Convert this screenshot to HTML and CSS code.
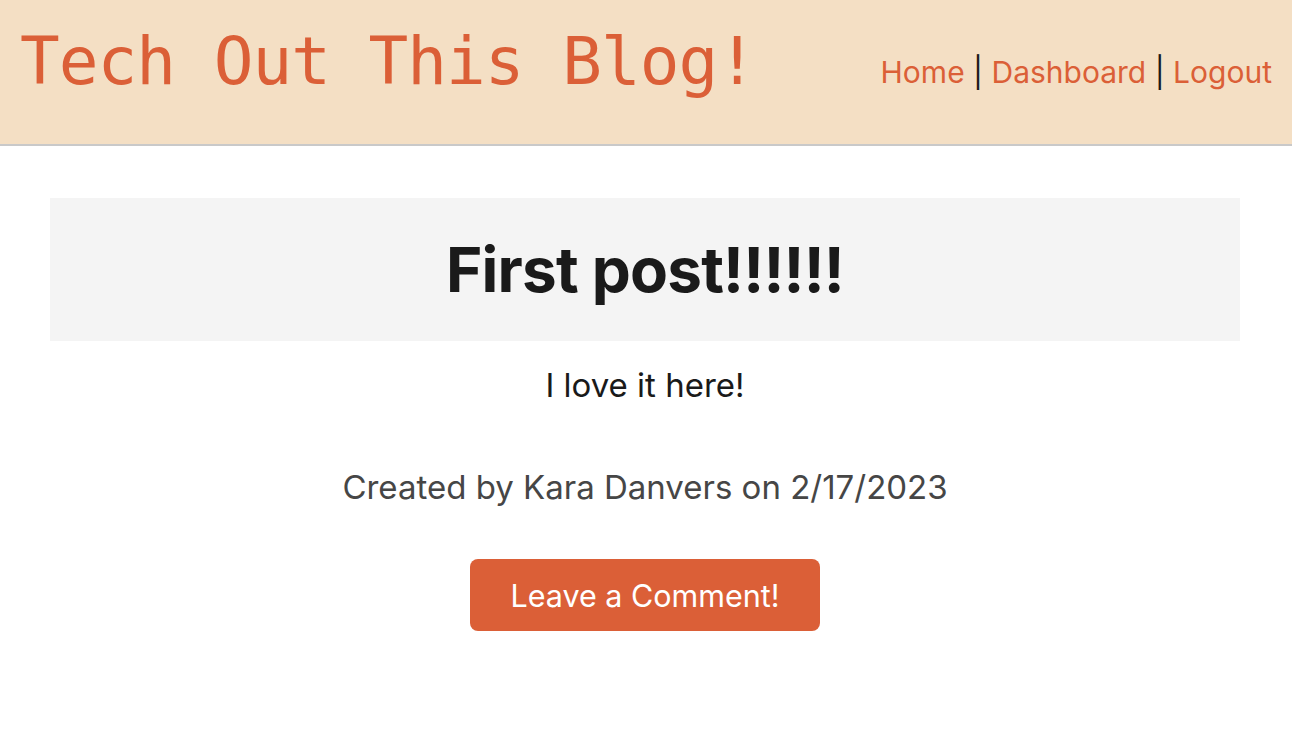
FILE: index.html
```html
<!DOCTYPE html>
<html lang="en">
<head>
<meta charset="utf-8">
<title>Tech Out This Blog!</title>
<link rel="stylesheet" href="styles.css">
</head>
<body>
<header class="site-header">
  <h1 class="site-title">Tech Out This Blog!</h1>
  <nav class="site-nav">
    <a href="#" class="nav-link">Home</a> | <a href="#" class="nav-link">Dashboard</a> | <a href="#" class="nav-link">Logout</a>
  </nav>
</header>
<main class="content">
  <section class="post">
    <div class="post-head">
      <h2 class="post-title">First post!!!!!!</h2>
    </div>
    <p class="post-body">I love it here!</p>
    <p class="post-meta">Created by Kara Danvers on 2/17/2023</p>
    <button class="comment-btn" type="button">Leave a Comment!</button>
  </section>
</main>
</body>
</html>
```

FILE: styles.css
```css
* { box-sizing: border-box; }
html, body { margin: 0; padding: 0; background: #ffffff; }
body { font-family: "Inter", "Noto Sans", sans-serif; color: #1a1a1a; }

.site-header {
  height: 146px;
  background: #f4dfc4;
  border-bottom: 2px solid #c9c9c9;
  display: flex;
  justify-content: space-between;
  align-items: flex-start;
  padding: 0 20px 0 20px;
}
.site-title {
  margin: 22px 0 0 0;
  font-family: "DejaVu Sans Mono", "Liberation Mono", monospace;
  font-weight: normal;
  font-size: 66px;
  letter-spacing: -1px;
  line-height: 80px;
  color: #db5f37;
}
.site-nav {
  margin-top: 52px;
  font-size: 30px;
  line-height: 40px;
  color: #1a1a1a;
}
.nav-link { color: #db5f37; text-decoration: none; }

.content { padding: 52px 52px 0 50px; }
.post { display: flex; flex-direction: column; align-items: center; }
.post-head {
  align-self: stretch;
  background: #f4f4f4;
  height: 143px;
  display: flex;
  align-items: center;
  justify-content: center;
}
.post-title {
  margin: 0;
  font-size: 62px;
  font-weight: 700;
  letter-spacing: -0.8px;
  color: #1a1a1a;
}
.post-body {
  margin: 22px 0 0 0;
  font-size: 33px;
  line-height: 44px;
  color: #1a1a1a;
}
.post-meta {
  margin: 58px 0 0 0;
  font-size: 33px;
  line-height: 44px;
  color: #464646;
}
.comment-btn {
  margin-top: 50px;
  width: 350px;
  height: 72px;
  border: none;
  border-radius: 8px;
  background: #db5f37;
  color: #ffffff;
  font-family: "Inter", "Noto Sans", sans-serif;
  font-size: 30.5px;
}
```
